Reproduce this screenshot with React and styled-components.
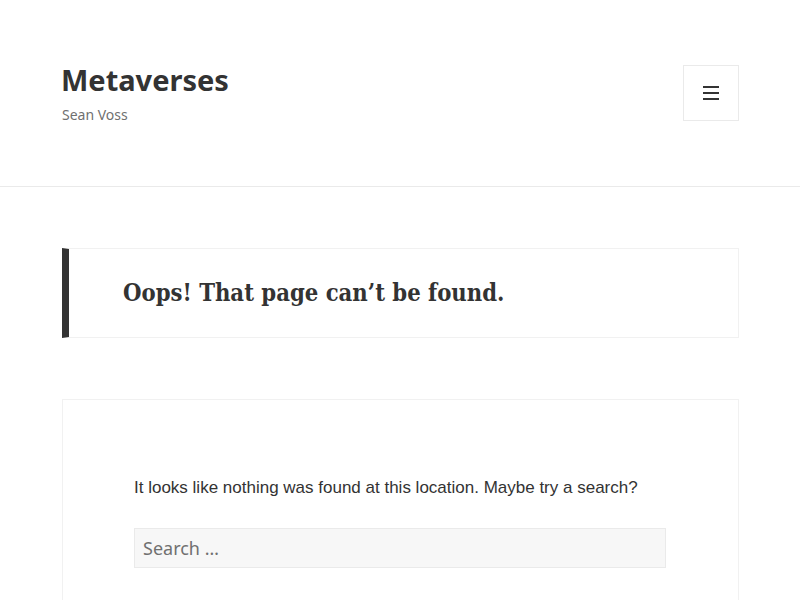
import styled, { createGlobalStyle } from 'styled-components';

const GlobalStyle = createGlobalStyle`
  html, body {
    margin: 0;
    padding: 0;
    background: #fff;
  }
  body {
    font-family: "Noto Sans", sans-serif;
    color: #333;
  }
`;

const Page = styled.div`
  width: 800px;
  height: 600px;
  overflow: hidden;
`;

const Header = styled.header`
  display: flex;
  justify-content: space-between;
  align-items: flex-start;
  padding: 65px 61px 0 62px;
  height: 121px;
  border-bottom: 1px solid #eaeaea;
`;

const Branding = styled.div`
  display: flex;
  flex-direction: column;
`;

const SiteTitle = styled.a`
  margin-left: -1px;
  font-family: "Noto Sans", sans-serif;
  font-weight: 700;
  font-size: 29px;
  line-height: 29px;
  color: #333;
  text-decoration: none;
`;

const SiteDescription = styled.p`
  margin: 11px 0 0;
  font-size: 14px;
  line-height: 20px;
  color: #707070;
`;

const MenuToggle = styled.button`
  width: 56px;
  height: 56px;
  padding: 0;
  display: flex;
  align-items: center;
  justify-content: center;
  background: #fff;
  border: 1px solid #eaeaea;
  cursor: pointer;
`;

const Main = styled.main`
  padding: 61px 61px 0 62px;
  display: flex;
  flex-direction: column;
  gap: 61px;
`;

const PageHeader = styled.div`
  height: 88px;
  display: flex;
  align-items: center;
  padding-left: 54px;
  border: 1px solid #f1f1f1;
  border-left: 7px solid #333;
`;

const PageTitle = styled.h1`
  margin: 0;
  font-family: "DejaVu Serif Condensed", "DejaVu Serif", serif;
  font-weight: 700;
  font-size: 23.6px;
  color: #333;
`;

const Content = styled.section`
  height: 260px;
  padding: 75px 71px 0;
  border: 1px solid #f1f1f1;
  border-bottom: none;
`;

const Lead = styled.p`
  margin: 0 0 27px;
  font-family: "Liberation Sans", Arial, sans-serif;
  font-size: 17px;
  line-height: 26px;
  color: #333;
`;

const SearchInput = styled.input`
  box-sizing: border-box;
  width: 532px;
  height: 40px;
  padding: 0 8px;
  background: #f7f7f7;
  border: 1px solid #eaeaea;
  font-family: "Noto Sans", sans-serif;
  font-size: 18px;
  color: #333;
  outline: none;

  &::placeholder {
    color: #707070;
  }
`;

function MenuIcon() {
  return (
    <svg width="16" height="14" viewBox="0 0 16 14">
      <rect x="0" y="0" width="16" height="2" fill="#333" />
      <rect x="0" y="6" width="16" height="2" fill="#333" />
      <rect x="0" y="12" width="16" height="2" fill="#333" />
    </svg>
  );
}

export default function App() {
  return (
    <Page>
      <GlobalStyle />
      <Header>
        <Branding>
          <SiteTitle href="#">Metaverses</SiteTitle>
          <SiteDescription>Sean Voss</SiteDescription>
        </Branding>
        <MenuToggle aria-label="Menu and widgets">
          <MenuIcon />
        </MenuToggle>
      </Header>
      <Main>
        <PageHeader>
          <PageTitle>Oops! That page can’t be found.</PageTitle>
        </PageHeader>
        <Content>
          <Lead>It looks like nothing was found at this location. Maybe try a search?</Lead>
          <SearchInput type="search" placeholder="Search …" />
        </Content>
      </Main>
    </Page>
  );
}
